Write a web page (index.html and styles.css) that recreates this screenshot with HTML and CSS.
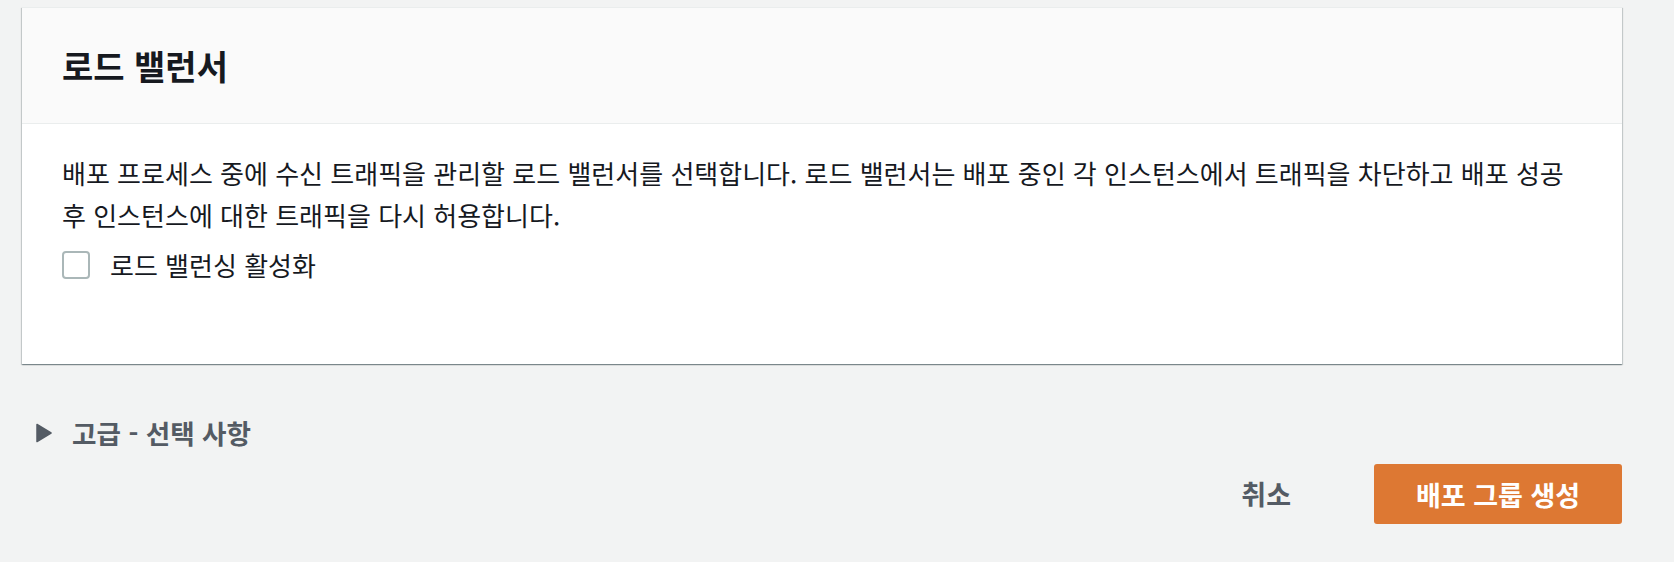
FILE: index.html
```html
<!DOCTYPE html>
<html lang="ko">
<head>
    <meta charset="UTF-8">
    <meta name="viewport" content="width=device-width, initial-scale=1.0">
    <title>로드 밸런서</title>
    <link rel="stylesheet" href="styles.css">
</head>
<body>
    <main class="page">
        <!-- Load balancer panel -->
        <section class="panel">
            <div class="panel-header">
                <h2>로드 밸런서</h2>
            </div>
            <div class="panel-body">
                <p class="panel-desc">배포 프로세스 중에 수신 트래픽을 관리할 로드 밸런서를 선택합니다. 로드 밸런서는 배포 중인 각 인스턴스에서 트래픽을 차단하고 배포 성공 후 인스턴스에 대한 트래픽을 다시 허용합니다.</p>
                <label class="check-row">
                    <input type="checkbox" class="check-input">
                    <span class="check-box"></span>
                    <span>로드 밸런싱 활성화</span>
                </label>
            </div>
        </section>

        <!-- Advanced (collapsed) -->
        <div class="expander">
            <svg class="expander-icon" width="16" height="20" viewBox="0 0 16 20">
                <path d="M1 1.5 L15 10 L1 18.5 Z" fill="#545b64" stroke="#545b64" stroke-width="1.5" stroke-linejoin="round"/>
            </svg>
            <span>고급 - 선택 사항</span>
        </div>

        <!-- Actions -->
        <div class="actions">
            <button type="button" class="btn-link">취소</button>
            <button type="button" class="btn-primary">배포 그룹 생성</button>
        </div>
    </main>
</body>
</html>
```

FILE: styles.css
```css
body {
    margin: 0;
    background-color: #f2f3f3;
    color: #16191f;
    font-family: "Noto Sans CJK KR", "Noto Sans", sans-serif;
    font-size: 26px;
    line-height: 42px;
}

.page {
    padding: 7px 52px 0 22px;
}

.panel {
    background-color: #ffffff;
    border-top: 1px solid #eaeded;
    box-shadow: 0 1px 1px 0 rgba(0, 28, 36, 0.3), 1px 1px 1px 0 rgba(0, 28, 36, 0.15), -1px 1px 1px 0 rgba(0, 28, 36, 0.15);
}

.panel-header {
    background-color: #fafafa;
    border-bottom: 1px solid #eaeded;
    padding: 0 40px;
    height: 115px;
    display: flex;
    align-items: center;
}

.panel-header h2 {
    margin: 0;
    font-size: 34px;
    font-weight: 700;
    line-height: 44px;
}

.panel-body {
    padding: 28px 40px 78px 40px;
}

.panel-desc {
    margin: 0 0 8px 0;
}

.check-row {
    display: flex;
    align-items: center;
    gap: 20px;
}

.check-input {
    display: none;
}

.check-box {
    width: 24px;
    height: 24px;
    border: 2px solid #aab7b8;
    border-radius: 4px;
    background-color: #ffffff;
    flex-shrink: 0;
}

.expander {
    margin-top: 48px;
    padding-left: 14px;
    display: flex;
    align-items: center;
    gap: 20px;
    color: #545b64;
    font-weight: 700;
    font-size: 26.6px;
}

.expander-icon {
    display: block;
}

.actions {
    margin-top: 10px;
    display: flex;
    justify-content: flex-end;
    align-items: center;
    gap: 48px;
}

.btn-link {
    background: none;
    border: none;
    padding: 0 35px;
    font-family: inherit;
    font-size: 27px;
    font-weight: 700;
    color: #545b64;
    line-height: 60px;
}

.btn-primary {
    background-color: #dd7833;
    border: none;
    border-radius: 3px;
    width: 248px;
    height: 60px;
    font-family: inherit;
    font-size: 27px;
    font-weight: 700;
    color: #ffffff;
}
```
